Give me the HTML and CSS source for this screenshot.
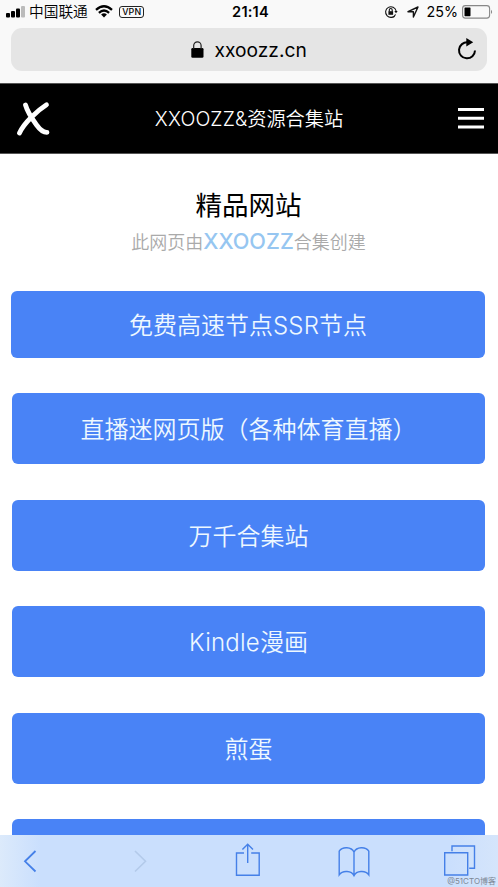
FILE: index.html
```html
<!DOCTYPE html>
<html lang="zh-CN">
<head>
<meta charset="utf-8">
<title>XXOOZZ&amp;资源合集站</title>
<link rel="stylesheet" href="styles.css">
</head>
<body>
<div class="status">
  <div class="status-left">
    <svg class="signal" width="20" height="12" viewBox="0 0 20 12"><rect x="0" y="7" width="4" height="4.5" rx="1"/><rect x="5" y="5" width="4" height="6.5" rx="1"/><rect x="10" y="2.5" width="4" height="9" rx="1"/><rect x="15" y="0" width="4" height="11.5" rx="1" fill="#bbb"/></svg>
    <span class="carrier">中国联通</span>
    <svg class="wifi" width="18" height="13" viewBox="0 0 18 13" fill="none" stroke="#000" stroke-width="2.3"><path d="M1 4.8Q9-2.2 17 4.8M3.9 7.8Q9 3.3 14.1 7.8"/><path d="M6.1 9.5Q9 7.2 11.9 9.5L9 12.6Z" fill="#000" stroke="none"/></svg>
    <span class="vpn">VPN</span>
  </div>
  <span class="time">21:14</span>
  <div class="status-right">
    <svg width="14" height="14" viewBox="0 0 14 14" fill="none" stroke="#111" stroke-width="1.1"><path d="M11.6 9.5A5.3 5.3 0 1 1 12.1 6M10.7 11.2A5.3 5.3 0 0 1 6.6 12.3"/><path d="M10.3 6h3.4l-1.7 2.3z" fill="#111" stroke="none"/><rect x="4.4" y="6.2" width="4.7" height="3.6" fill="#111" stroke="none"/><path d="M5.3 6.5V5a1.45 1.45 0 0 1 2.9 0v1.5"/></svg>
    <svg class="arrow" width="12" height="12" viewBox="0 0 12 12" fill="none" stroke="#111" stroke-width="1.4" stroke-linejoin="round"><path d="M1 5.7L11 1 6.4 11V5.8Z"/></svg>
    <span class="percent">25%</span>
    <svg class="battery" width="31" height="14" viewBox="0 0 31 14"><rect x=".6" y=".6" width="27" height="12.5" rx="2.8" fill="none" stroke="#888" stroke-width="1.1"/><rect x="2.5" y="2.5" width="6" height="8.7" rx=".6"/><path d="M29 4.7q2.2 2.2 0 4.4z" fill="#888"/></svg>
  </div>
</div>
<div class="address-wrap">
  <div class="address">
    <svg class="lock" width="13" height="17" viewBox="0 0 13 17"><rect x=".3" y="7" width="12.2" height="9.7" rx="1.3"/><path d="M2.7 8V4.5a3.7 3.7 0 0 1 7.4 0V8" fill="none" stroke="#222" stroke-width="1.2"/></svg>
    <span class="url">xxoozz.cn</span>
    <svg class="reload" width="20" height="22" viewBox="0 0 20 22"><path d="M11 4.4A8 8 0 1 0 18 12.5" fill="none" stroke="#000" stroke-width="2"/><path d="M9.3 0L16.2 4.2 9.3 8.5Z"/></svg>
  </div>
</div>
<header class="header">
  <svg class="logo" width="36" height="36" viewBox="0 0 36 36" fill="none" stroke="#fff" stroke-width="4.8" stroke-linecap="round"><path d="M10.5 4C13 12.5 17 17.5 22 24.5Q27 31.5 32 31.3M31.5 3.8C22.5 9.5 9 22 4.5 32"/></svg>
  <div class="site-name"><span class="site-latin">XXOOZZ&amp;</span>资源合集站</div>
  <svg class="menu" width="26" height="22" viewBox="0 0 26 22" fill="#fff"><path d="M0 0h26v3H0zM0 8.8h26v3H0zM0 17.5h26v3H0z"/></svg>
</header>
<main class="page">
  <h1>精品网站</h1>
  <p class="intro">此网页由<a class="brand">XXOOZZ</a>合集创建</p>
  <nav class="links">
    <a class="link link-first">免费高速节点<span class="latin">SSR</span>节点</a>
    <a class="link">直播迷网页版（各种体育直播）</a>
    <a class="link">万千合集站</a>
    <a class="link"><span class="latin">Kindle</span>漫画</a>
    <a class="link">煎蛋</a>
    <a class="link"></a>
  </nav>
</main>
<footer class="toolbar">
  <svg viewBox="0 0 36 36"><path d="M21.5 8L11 18.3 21.5 28.5" stroke-width="1.8"/></svg>
  <svg class="disabled" viewBox="0 0 36 36"><path d="M14 8l10.5 10.3L14 28.5" stroke-width="1.6"/></svg>
  <svg viewBox="0 0 36 36"><path d="M16 10H8.5v22.3h22.7V10h-8M19.7 20V1.2M14.4 6.5l5.3-5.3 5.3 5.3"/></svg>
  <svg viewBox="0 0 36 36"><path d="M19 9.2C16.5 3.7 7.5 3.3 4.2 8.2v23.6c3.5-5 12.5-4 14.8.8 2.3-4.8 11.3-5.8 14.8-.8V8.2C30.5 3.3 21.5 3.7 19 9.2v23.4"/></svg>
  <svg viewBox="0 0 36 36"><path d="M2.7 9.7h23V32h-23zM10 8.3V3h22.5v22.3h-5.3"/></svg>
  <span class="watermark">@51CTO博客</span>
</footer>
</body>
</html>
```
FILE: styles.css
```css
* { box-sizing: border-box; }
body {
  margin: 0;
  height: 887px;
  overflow: hidden;
  display: flex;
  flex-direction: column;
  background: #fff;
  color: #000;
  font-family: Inter, "Noto Sans CJK SC", sans-serif;
}
svg { display: block; flex: none; }
.status {
  height: 28px;
  flex: none;
  display: grid;
  grid-template-columns: 1fr auto 1fr;
  padding: 0 5px 5px 6px;
  align-items: center;
  background: #f9f9f9;
}
.status-left, .status-right { display: flex; align-items: center; }
.status-right { justify-content: flex-end; }
.carrier { margin-left: 3px; font-size: 14.7px; line-height: 20px; font-weight: 350; }
.wifi { margin-left: 7px; }
.vpn {
  margin-left: 6.5px;
  width: 25px;
  height: 12px;
  border: 1px solid #222;
  border-radius: 3px;
  font-size: 8.8px;
  line-height: 10px;
  text-align: center;
  letter-spacing: .2px;
  font-weight: 500;
}
.time { font-size: 14.6px; font-weight: 600; letter-spacing: .2px; padding-left: 2px; }
.arrow { margin-left: 9px; }
.percent { margin-left: 8px; font-size: 14.3px; }
.battery { margin-left: 4px; }
.address-wrap { flex: none; height: 55px; padding: 0 11px; background: #f9f9f9; }
.address {
  height: 43px;
  border-radius: 11px;
  background: #e5e5e5;
  display: flex;
  align-items: center;
  padding: 0 10px 0 180px;
}
.lock { margin-bottom: 1px; }
.url { margin-left: 10.5px; font-size: 19.2px; }
.reload { margin-left: auto; margin-bottom: 1px; }
.header {
  height: 71px;
  flex: none;
  background: #000;
  color: #fff;
  display: grid;
  grid-template-columns: 36px 1fr 26px;
  align-items: center;
  padding: 0 14px 0 15px;
  border-top: 1px solid #555;
  border-bottom: 1px solid #555;
}
.site-name { text-align: center; font-size: 19.2px; line-height: 28px; font-weight: 350; padding-right: 11px; }
.site-latin { font-size: 19.6px; font-weight: 300; letter-spacing: .1px; }
.page { flex: 1; min-height: 0; overflow: hidden; padding: 31px 13px 0 12px; }
h1 { margin: 0; text-align: center; font-size: 26.5px; line-height: 40px; font-weight: 400; }
.intro { margin: 2px 0 0; text-align: center; font-size: 18px; line-height: 28px; font-weight: 350; color: #aaa; }
.brand { font-size: 21.7px; font-weight: 500; color: #96c6f1; }
.links { display: flex; flex-direction: column; gap: 35.3px; margin-top: 34px; }
.link {
  height: 71.2px;
  flex: none;
  border-radius: 6px;
  background: #4983f6;
  color: #eef8ff;
  text-align: center;
  line-height: 74px;
  font-size: 24px;
  font-weight: 350;
}
.latin { font-weight: 350; letter-spacing: .2px; }
.link-first { height: 67px; margin-left: -1px; line-height: 69px; }
.toolbar {
  position: relative;
  height: 52px;
  flex: none;
  display: flex;
  justify-content: space-between;
  align-items: center;
  padding: 0 20px 0 14px;
  background: linear-gradient(90deg, #dceafb 0, #cadffd 40px, #cadffd 450px, #d5e5fb 100%);
}
.toolbar svg { width: 36px; height: 36px; fill: none; stroke: #4580e8; stroke-width: 1.4; }
.toolbar .disabled { stroke: #b3caea; }
.watermark { position: absolute; right: 2px; bottom: 0; font-size: 8px; line-height: 12px; color: #7d8795; }
```
